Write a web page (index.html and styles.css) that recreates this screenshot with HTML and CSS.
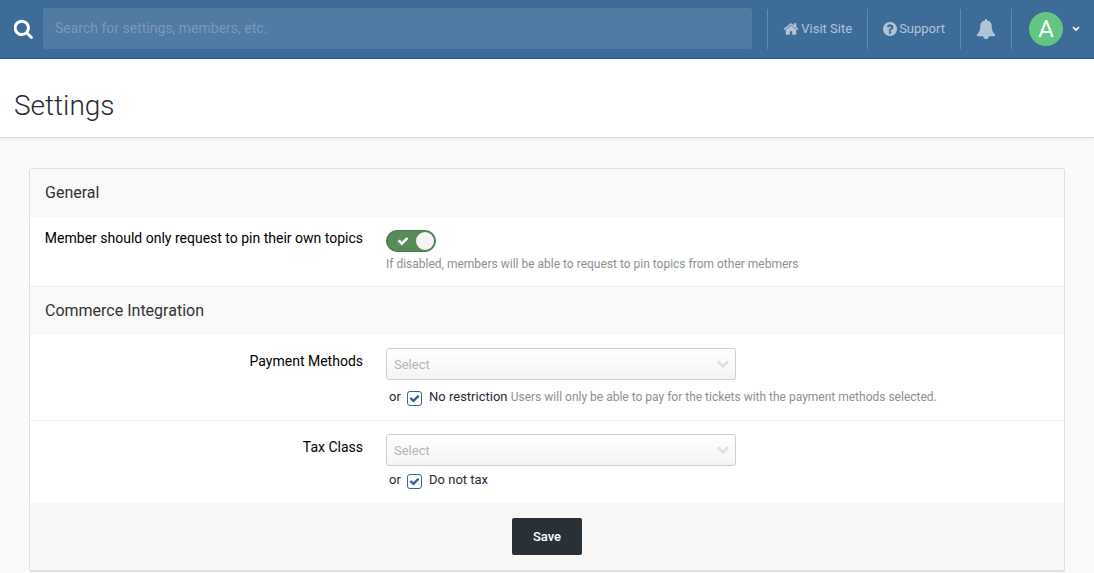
FILE: index.html
```html
<!DOCTYPE html>
<html lang="en">
<head>
<meta charset="utf-8">
<title>Settings</title>
<link rel="stylesheet" href="styles.css">
</head>
<body>
<header class="topbar">
  <form class="search" role="search">
    <svg class="search-icon" viewBox="64 64 1664 1728" aria-hidden="true"><path d="M1152 832q0-185-131.500-316.500t-316.500-131.500-316.500 131.500-131.500 316.500 131.500 316.500 316.500 131.500 316.500-131.500 131.500-316.500zm512 832q0 52-38 90t-90 38q-54 0-90-38l-343-342q-179 124-399 124-143 0-273.500-55.500t-225-150-150-225-55.500-273.500 55.500-273.500 150-225 225-150 273.500-55.500 273.500 55.500 225 150 150 225 55.500 273.500q0 220-124 399l343 343q37 37 37 90z"/></svg>
    <input class="search-input" type="search" aria-label="Search" placeholder="Search for settings, members, etc.">
  </form>
  <nav class="topnav">
    <a class="nav-item" href="#"><svg class="nav-icon nav-icon-home" viewBox="64 128 1664 1536" aria-hidden="true"><path d="M1472 992v480q0 26-19 45t-45 19h-384v-384h-256v384h-384q-26 0-45-19t-19-45v-480q0-1 .5-3t.5-3l575-474 575 474q1 2 1 6zm223-69l-62 74q-8 9-21 11h-3q-13 0-21-7l-692-577-692 577q-12 8-24 7-13-2-21-11l-62-74q-8-10-7-23.500t11-21.500l719-599q32-26 76-26t76 26l244 204v-195q0-14 9-23t23-9h192q14 0 23 9t9 23v408l219 182q10 8 11 21.500t-7 23.500z"/></svg>Visit Site</a>
    <a class="nav-item" href="#"><svg class="nav-icon" viewBox="128 128 1536 1536" aria-hidden="true"><path d="M1024 1376v-192q0-14-9-23t-23-9h-192q-14 0-23 9t-9 23v192q0 14 9 23t23 9h192q14 0 23-9t9-23zm256-672q0-88-55.500-163t-138.500-116-170-41q-243 0-371 213-15 24 8 42l132 100q7 6 19 6 16 0 25-12 53-68 86-92 34-24 86-24 48 0 85.500 26t37.500 59q0 38-20 61t-68 45q-63 28-115.500 86.500t-52.500 125.500v36q0 14 9 23t23 9h192q14 0 23-9t9-23q0-19 21.500-49.500t54.500-49.500q32-18 49-28.500t46-35 44.500-48 28-60.500 12.500-81zm384 192q0 209-103 385.500t-279.500 279.500-385.500 103-385.500-103-279.500-279.500-103-385.500 103-385.500 279.500-279.500 385.500-103 385.500 103 279.500 279.500 103 385.500z"/></svg>Support</a>
    <button class="nav-item nav-bell" type="button" aria-label="Notifications"><svg class="bell-icon" viewBox="0 0 1792 1792" aria-hidden="true"><path d="M1728 1408q0 52-38 90t-90 38h-448q0 106-75 181t-181 75-181-75-75-181h-448q-52 0-90-38t-38-90q50-42 91-88t85-119.500 74.500-158.500 50-206 19.500-260q0-152 117-282.500t307-158.500q-8-19-8-39 0-40 28-68t68-28 68 28 28 68q0 20-8 39 190 28 307 158.500t117 282.500q0 139 19.500 260t50 206 74.500 158.500 85 119.500 91 88z"/></svg></button>
    <button class="nav-item nav-user" type="button" aria-label="Account"><span class="avatar">A</span><svg class="user-caret" viewBox="0 0 8 6" aria-hidden="true"><path d="M1 1l3 3 3-3"/></svg></button>
  </nav>
</header>

<div class="page-head"><h1 class="page-title">Settings</h1></div>

<main class="content">
  <form class="panel">
    <h2 class="section-title">General</h2>
    <div class="row row-general">
      <label class="row-label" for="own-topics">Member should only request to pin their own topics</label>
      <div class="row-field">
        <input class="toggle" type="checkbox" id="own-topics" checked>
        <p class="hint">If disabled, members will be able to request to pin topics from other mebmers</p>
      </div>
    </div>
    <h2 class="section-title section-divided">Commerce Integration</h2>
    <div class="row">
      <label class="row-label" for="methods">Payment Methods</label>
      <div class="row-field">
        <select class="select" id="methods" disabled><option>Select</option></select>
        <div class="option option-spaced">or <input class="check" type="checkbox" id="no-restriction" checked><label for="no-restriction">No restriction</label> <span class="hint">Users will only be able to pay for the tickets with the payment methods selected.</span></div>
      </div>
    </div>
    <div class="row row-divided">
      <label class="row-label" for="tax">Tax Class</label>
      <div class="row-field">
        <select class="select" id="tax" disabled><option>Select</option></select>
        <div class="option">or <input class="check" type="checkbox" id="no-tax" checked><label for="no-tax">Do not tax</label></div>
      </div>
    </div>
    <div class="panel-foot"><button class="save" type="button">Save</button></div>
  </form>
</main>
</body>
</html>
```
FILE: styles.css
```css
* { box-sizing: border-box; }

body {
  margin: 0;
  background: #fafafa;
  color: #272a34;
  font: 13px/20px Roboto, sans-serif;
}

h1, h2, p { margin: 0; font-weight: 400; }
button, input, select { font: inherit; }

/* Top bar */
.topbar {
  display: flex;
  align-items: center;
  padding: 8px 14px 9px;
  background: #3d6c99;
  border-bottom: 1px solid #325f8b;
}
.search {
  display: flex;
  flex: 1;
  align-items: center;
  gap: 9px;
}
.search-icon { width: 20px; height: 20px; fill: #fff; }
.search-input {
  flex: 1;
  min-width: 0;
  height: 41px;
  padding: 0 12px 2px;
  border: 0;
  border-radius: 3px;
  background: #507ba3;
  color: #fff;
  font-size: 14px;
}
.search-input::placeholder { color: #7899ba; }
.topnav { display: flex; margin-left: 15px; }
.nav-item {
  display: flex;
  align-items: center;
  gap: 2px;
  height: 40px;
  padding: 0 15px;
  border: 0;
  border-left: 1px solid #6489ad;
  background: none;
  color: #b1c4d6;
  text-decoration: none;
}
.nav-icon { width: 14px; height: 14px; fill: currentColor; }
.nav-icon-home { width: 16px; }
.bell-icon { width: 20px; height: 20px; fill: currentColor; }
.nav-user { gap: 9px; padding: 0 0 0 17px; }
.avatar {
  width: 34px;
  height: 34px;
  border-radius: 50%;
  background: #62c582;
  color: #fff;
  font-size: 24px;
  line-height: 35px;
  text-align: center;
}
.user-caret { width: 8px; height: 6px; fill: none; stroke: #fff; stroke-width: 1.6; }

/* Page heading */
.page-head {
  padding: 29px 14px 14px;
  background: #fff;
  border-bottom: 1px solid #d9d9d9;
  box-shadow: 0 1px 4px rgba(0, 0, 0, 0.08);
}
.page-title { font-size: 28px; font-weight: 300; line-height: 35px; }

/* Settings panel */
.content { padding: 30px 29px 0; }
.panel {
  background: #fff;
  border: 1px solid #e0e0e0;
  border-bottom-width: 2px;
  border-radius: 3px;
}
.section-title {
  padding: 12px 15px;
  background: #f9f9f9;
  color: #333;
  font-size: 16px;
  line-height: 24px;
}
.section-divided { border-top: 1px solid #f0f0f0; }
.row {
  display: grid;
  grid-template-columns: 323px 1fr;
  gap: 23px;
  padding: 13px 10px;
}
.row-general { padding-bottom: 12px; }
.row-divided { border-top: 1px solid #f0f0f0; }
.row-label {
  padding-top: 3px;
  color: #000;
  font-size: 14px;
  text-align: right;
}
.row-general .row-label { padding-top: 0; margin-top: -2px; }
.row-field { min-width: 0; }
.hint { color: #8c8f94; font-size: 12px; }

.toggle {
  display: block;
  position: relative;
  appearance: none;
  width: 50px;
  height: 22px;
  margin: 0 0 2px;
  border: 1px solid #4b7a4d;
  border-radius: 11px;
  background: #588a5a url("data:image/svg+xml,%3Csvg xmlns='http://www.w3.org/2000/svg' viewBox='0 0 1792 1792'%3E%3Cpath fill='white' d='M1671 566q0 40-28 68l-724 724-136 136q-28 28-68 28t-68-28l-136-136-362-362q-28-28-28-68t28-68l136-136q28-28 68-28t68 28l294 295 656-657q28-28 68-28t68 28l136 136q28 28 28 68z'/%3E%3C/svg%3E") 10px 4px / 12px 12px no-repeat;
}
.toggle::before {
  content: "";
  position: absolute;
  top: 1px;
  right: 1px;
  width: 18px;
  height: 18px;
  border-radius: 50%;
  background: #f4f4f4;
}
.select {
  display: block;
  appearance: none;
  width: 350px;
  max-width: 100%;
  height: 32px;
  padding: 2px 7px 0;
  border: 1px solid #cfcfcf;
  border-radius: 3px;
  background:
    url("data:image/svg+xml,%3Csvg xmlns='http://www.w3.org/2000/svg' viewBox='0 0 12 8'%3E%3Cpath fill='none' stroke='%23dfdfdf' stroke-width='2.600' d='M1 1.300l5 5 5-5'/%3E%3C/svg%3E") right 6px center / 12px 8px no-repeat,
    linear-gradient(#fff, #f4f4f4);
  color: #b5b5b5;
  opacity: 1;
}
.option { padding: 4px 3px 0; }
.option-spaced { padding-top: 7px; }
.check {
  appearance: none;
  width: 15px;
  height: 15px;
  margin: 0 7px 0 3px;
  border: 1px solid #3d6594;
  border-radius: 3px;
  vertical-align: -5px;
  background: #fff url("data:image/svg+xml,%3Csvg xmlns='http://www.w3.org/2000/svg' viewBox='0 0 1792 1792'%3E%3Cpath fill='%23355f92' d='M1671 566q0 40-28 68l-724 724-136 136q-28 28-68 28t-68-28l-136-136-362-362q-28-28-28-68t28-68l136-136q28-28 68-28t68 28l294 295 656-657q28-28 68-28t68 28l136 136q28 28 28 68z'/%3E%3C/svg%3E") center / 11px 11px no-repeat;
}

.panel-foot {
  display: flex;
  justify-content: center;
  padding: 15px;
  background: #f8f8f8;
}
.save {
  height: 37px;
  padding: 0 21px;
  border: 0;
  border-radius: 2px;
  background: #293137;
  color: #fff;
  font-weight: 500;
}
```
